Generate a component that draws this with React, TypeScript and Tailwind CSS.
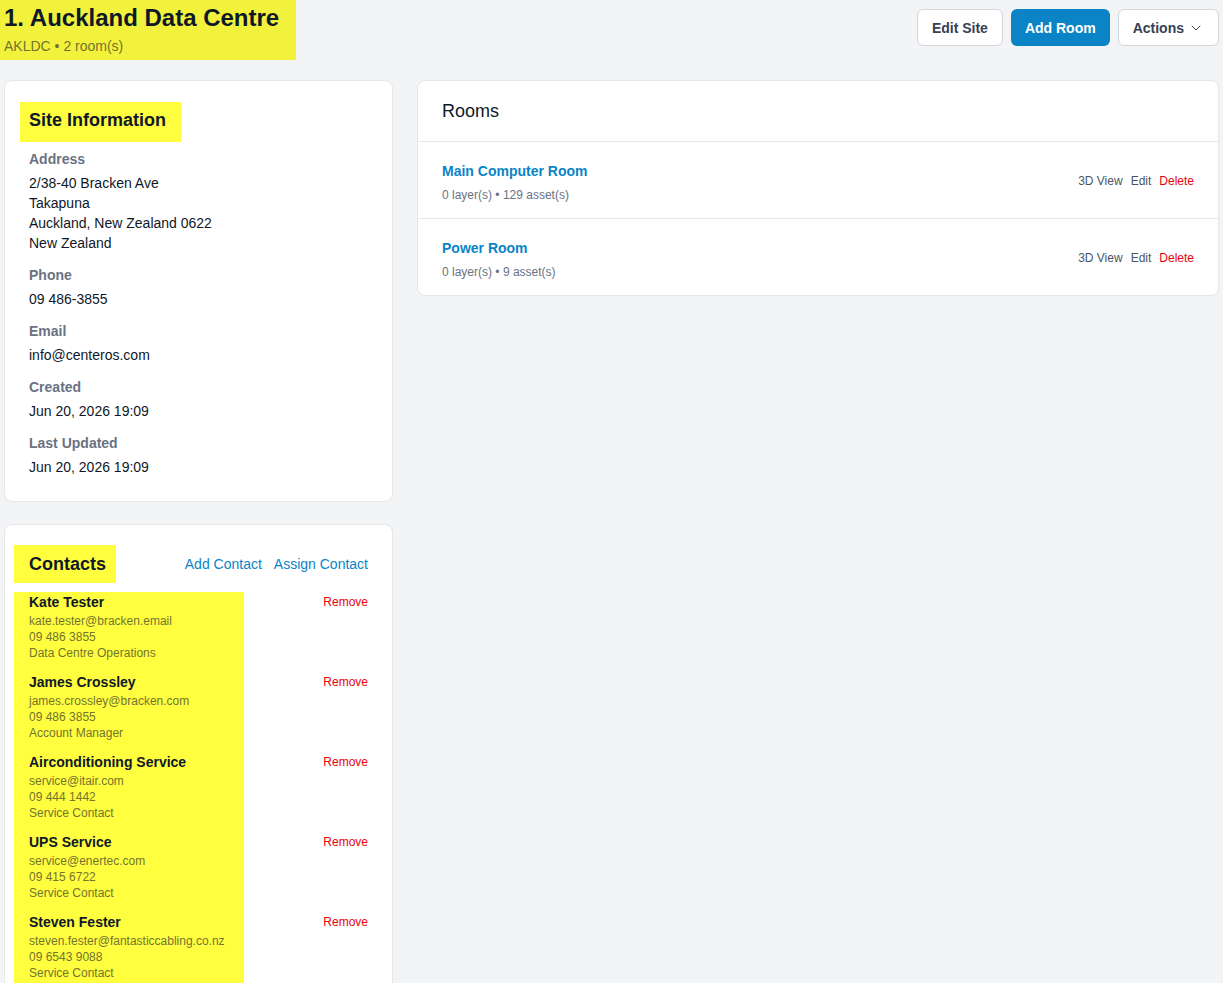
import { ChevronDown } from "lucide-react";

const site = {
    name: "1. Auckland Data Centre",
    code: "AKLDC",
    roomCount: 2,
    address: ["2/38-40 Bracken Ave", "Takapuna", "Auckland, New Zealand 0622", "New Zealand"],
    phone: "09 486-3855",
    email: "info@centeros.com",
    created: "Jun 20, 2026 19:09",
    updated: "Jun 20, 2026 19:09",
};

const rooms = [
    { id: "r1", name: "Main Computer Room", layers: 0, assets: 129 },
    { id: "r2", name: "Power Room", layers: 0, assets: 9 },
];

const contacts = [
    { name: "Kate Tester", email: "kate.tester@bracken.email", phone: "09 486 3855", role: "Data Centre Operations" },
    { name: "James Crossley", email: "james.crossley@bracken.com", phone: "09 486 3855", role: "Account Manager" },
    { name: "Airconditioning Service", email: "service@itair.com", phone: "09 444 1442", role: "Service Contact" },
    { name: "UPS Service", email: "service@enertec.com", phone: "09 415 6722", role: "Service Contact" },
    { name: "Steven Fester", email: "steven.fester@fantasticcabling.co.nz", phone: "09 6543 9088", role: "Service Contact" },
];

function Field({ label, children }: { label: string; children: React.ReactNode }) {
    return (
        <div>
            <p className="text-sm font-semibold leading-5 text-gray-500">{label}</p>
            <div className="mt-1 text-sm leading-5 text-gray-900">{children}</div>
        </div>
    );
}

export default function App() {
    return (
        <main
            className="min-h-screen bg-[#f3f4f6] pr-1 pb-6"
            style={{ fontFamily: '"Liberation Sans", Arial, sans-serif' }}
        >
            <div className="flex items-start justify-between">
                <div className="w-fit bg-[#f2f23c] pl-1 pr-[17px] pt-0.5 pb-1">
                    <h1 className="text-2xl font-bold leading-8 text-gray-900">{site.name}</h1>
                    <p className="mt-0.5 text-sm leading-5 text-[#74742e]">
                        {site.code} • {site.roomCount} room(s)
                    </p>
                </div>

                <div className="mt-[9px] flex gap-2">
                    <button className="h-[37px] rounded-md border border-gray-300 bg-white px-[14px] text-sm font-semibold text-gray-700">
                        Edit Site
                    </button>
                    <button className="h-[37px] rounded-md bg-[#0a84c6] px-[14px] text-sm font-semibold text-white">
                        Add Room
                    </button>
                    <button className="flex h-[37px] items-center gap-1 rounded-md border border-gray-300 bg-white px-[14px] text-sm font-semibold text-gray-700">
                        Actions
                        <ChevronDown className="h-4 w-4" strokeWidth={1.5} />
                    </button>
                </div>
            </div>

            <div className="mt-5 grid grid-cols-[389px_1fr] items-start gap-6 pl-1">
                <div className="space-y-[22px]">
                    <section className="rounded-lg border border-gray-200 bg-white p-6">
                        <h2 className="-mt-[3px] -ml-[9px] w-fit bg-[#ffff40] pl-[9px] pr-[15px] pt-1 pb-2 text-lg font-semibold leading-7 text-gray-900">
                            Site Information
                        </h2>

                        <div className="mt-[7px] space-y-3">
                            <Field label="Address">
                                {site.address.map((line) => (
                                    <p key={line}>{line}</p>
                                ))}
                            </Field>
                            <Field label="Phone">{site.phone}</Field>
                            <Field label="Email">{site.email}</Field>
                            <Field label="Created">{site.created}</Field>
                            <Field label="Last Updated">{site.updated}</Field>
                        </div>
                    </section>

                    <section className="rounded-lg border border-gray-200 bg-white px-6 pt-6 pb-6">
                        <div className="-mt-1 flex items-center justify-between">
                            <h2 className="-ml-[15px] w-fit bg-[#ffff40] py-[5px] pl-[15px] pr-[10px] text-lg font-semibold leading-7 text-gray-900">
                                Contacts
                            </h2>
                            <div className="flex gap-3 text-sm text-[#0a84c6]">
                                <a href="#">Add Contact</a>
                                <a href="#">Assign Contact</a>
                            </div>
                        </div>

                        <ul className="mt-[9px]">
                            {contacts.map((contact) => (
                                <li key={contact.name} className="flex items-start justify-between">
                                    <div className="-ml-[15px] w-[230px] bg-[#ffff40] pl-[15px] pb-[11px]">
                                        <p className="text-sm font-semibold leading-5 text-gray-900">
                                            {contact.name}
                                        </p>
                                        <div className="mt-px text-xs leading-4 text-[#74742e]">
                                            <p className="whitespace-nowrap">{contact.email}</p>
                                            <p>{contact.phone}</p>
                                            <p>{contact.role}</p>
                                        </div>
                                    </div>
                                    <button className="mt-0.5 text-xs leading-4 text-red-600">Remove</button>
                                </li>
                            ))}
                        </ul>
                    </section>
                </div>

                <section className="rounded-lg border border-gray-200 bg-white">
                    <div className="border-b border-gray-200 px-6 py-4">
                        <h2 className="text-lg font-medium leading-7 text-gray-900">Rooms</h2>
                    </div>
                    <ul className="divide-y divide-gray-200">
                        {rooms.map((room) => (
                            <li key={room.id} className="flex items-center justify-between px-6 pt-[17px] pb-[15px]">
                                <div>
                                    <a href="#" className="text-sm font-semibold leading-6 text-[#0a84c6]">
                                        {room.name}
                                    </a>
                                    <p className="mt-1 text-xs leading-4 text-gray-500">
                                        {room.layers} layer(s) • {room.assets} asset(s)
                                    </p>
                                </div>
                                <div className="flex gap-2 text-xs">
                                    <a href="#" className="text-gray-600">3D View</a>
                                    <a href="#" className="text-gray-600">Edit</a>
                                    <a href="#" className="text-red-600">Delete</a>
                                </div>
                            </li>
                        ))}
                    </ul>
                </section>
            </div>
        </main>
    );
}
